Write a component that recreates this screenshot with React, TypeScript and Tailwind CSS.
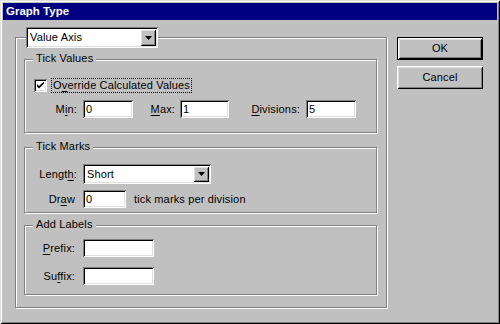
import React from "react";

const sunken =
  "bg-white shadow-[inset_1px_1px_0_#808080,inset_-1px_-1px_0_#fff,inset_2px_2px_0_#000,inset_-2px_-2px_0_#dfdfdf]";
const raised =
  "bg-[#c0c0c0] shadow-[inset_1px_1px_0_#fff,inset_-1px_-1px_0_#000,inset_2px_2px_0_#dfdfdf,inset_-2px_-2px_0_#808080]";

function GroupBox({
  label,
  className = "",
  children,
}: {
  label?: string;
  className?: string;
  children?: React.ReactNode;
}) {
  return (
    <div
      className={`relative border border-[#808080] shadow-[inset_1px_1px_0_#fff,1px_1px_0_#fff] ${className}`}
    >
      {label && (
        <span className="absolute -top-[9px] left-[8px] bg-[#c0c0c0] px-[3px] leading-[14px]">
          {label}
        </span>
      )}
      {children}
    </div>
  );
}

function Arrow() {
  return (
    <svg width="7" height="4" viewBox="0 0 7 4">
      <polygon points="0,0 7,0 3.5,4" fill="#000" />
    </svg>
  );
}

function Combo({ value, className = "" }: { value: string; className?: string }) {
  return (
    <div className={`flex items-center p-[2px] ${sunken} ${className}`}>
      <span className="flex-1 pl-[2px] leading-none">{value}</span>
      <div className={`w-[16px] h-full flex items-center justify-center ${raised}`}>
        <Arrow />
      </div>
    </div>
  );
}

function Edit({ value = "", className = "" }: { value?: string; className?: string }) {
  return (
    <div className={`h-[18px] flex items-center pl-[3px] ${sunken} ${className}`}>
      {value}
    </div>
  );
}

function Label({
  pre,
  u,
  post,
  className = "",
}: {
  pre?: string;
  u: string;
  post?: string;
  className?: string;
}) {
  return (
    <div className={`text-right ${className}`}>
      {pre}
      <span className="underline underline-offset-[2px]">{u}</span>
      {post}
    </div>
  );
}

function Button({ text, isDefault }: { text: string; isDefault?: boolean }) {
  return (
    <div className={`w-[86px] h-[23px] ${isDefault ? "border border-black" : ""}`}>
      <div className={`w-full h-full flex items-center justify-center ${raised}`}>{text}</div>
    </div>
  );
}

export default function App() {
  return (
    <div className="w-[500px] h-[324px] bg-[#c0c0c0] p-[3px] text-[11px] tracking-[0.15px] text-black font-['Liberation_Sans',Arial,sans-serif] shadow-[inset_1px_1px_0_#dfdfdf,inset_-1px_-1px_0_#000,inset_2px_2px_0_#fff,inset_-2px_-2px_0_#808080]">
      {/* title bar */}
      <div className="h-[17px] bg-[#000080] text-white font-bold text-[11.5px] tracking-normal pl-[3px] flex items-center">
        Graph Type
      </div>

      <div className="flex pl-[12px] pt-[17px]">
        {/* main group */}
        <GroupBox className="w-[372px] h-[271px] pl-[8px] pt-[21px]">
          <Combo value="Value Axis" className="absolute -top-[11px] left-[10px] w-[132px] h-[21px]" />

          <GroupBox label="Tick Values" className="w-[353px] h-[74px] pt-[18px]">
            <div className="flex items-center h-[15px] pl-[9px]">
              <div className={`w-[13px] h-[13px] flex items-center justify-center ${sunken}`}>
                <svg width="7" height="7" viewBox="0 0 7 7">
                  <path d="M0 2 L0 4.5 L2 6.5 L7 1.5 L7 -0.5 L2 4 Z" fill="#000" />
                </svg>
              </div>
              <div className="ml-[4px] border border-dotted border-black px-[1px] leading-[13px]">
                O<span className="underline underline-offset-[2px]">v</span>erride Calculated Values
              </div>
            </div>
            <div className="flex items-center mt-[7px]">
              <Label pre="M" u="i" post="n:" className="w-[58px] pr-[6px]" />
              <Edit value="0" className="w-[50px]" />
              <Label u="M" post="ax:" className="w-[47px] pr-[5px]" />
              <Edit value="1" className="w-[49px]" />
              <Label u="D" post="ivisions:" className="w-[77px] pr-[6px]" />
              <Edit value="5" className="w-[50px]" />
            </div>
          </GroupBox>

          <GroupBox label="Tick Marks" className="w-[353px] h-[66px] mt-[14px] pt-[16px]">
            <div className="flex items-center">
              <Label pre="Lengt" u="h" post=":" className="w-[58px] pr-[6px]" />
              <Combo value="Short" className="w-[128px] h-[20px]" />
            </div>
            <div className="flex items-center mt-[6px]">
              <Label pre="Dr" u="a" post="w" className="w-[58px] pr-[8px]" />
              <Edit value="0" className="w-[43px]" />
              <span className="ml-[8px]">tick marks per division</span>
            </div>
          </GroupBox>

          <GroupBox label="Add Labels" className="w-[353px] h-[70px] mt-[12px] pt-[13px]">
            <div className="flex items-center">
              <Label u="P" post="refix:" className="w-[58px] pr-[8px]" />
              <Edit className="w-[71px]" />
            </div>
            <div className="flex items-center mt-[10px]">
              <Label pre="Su" u="f" post="fix:" className="w-[58px] pr-[8px]" />
              <Edit className="w-[71px]" />
            </div>
          </GroupBox>
        </GroupBox>

        {/* buttons */}
        <div className="ml-[10px] flex flex-col gap-[6px]">
          <Button text="OK" isDefault />
          <Button text="Cancel" />
        </div>
      </div>
    </div>
  );
}
